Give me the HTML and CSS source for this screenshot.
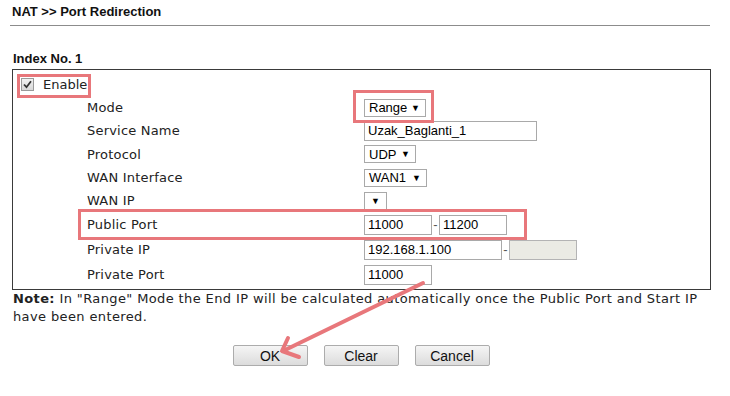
FILE: index.html
```html
<!DOCTYPE html>
<html lang="en">
<head>
  <meta charset="UTF-8">
  <meta name="viewport" content="width=device-width, initial-scale=1.0">
  <title>NAT Port Redirection</title>
  <link rel="stylesheet" href="styles.css">
</head>
<body>
  <div class="page">
    <h1 class="title">NAT &gt;&gt; Port Redirection</h1>
    <h2 class="index">Index No. 1</h2>

    <div class="box">
      <div class="enable">
        <span class="check">
          <svg width="11" height="11" viewBox="0 0 11 11"><path d="M2 5.5 L4.5 8.2 L9 2.2" fill="none" stroke="#333" stroke-width="1.8"/></svg>
        </span>
        <span>Enable</span>
      </div>

      <div class="label">Mode</div>
      <div class="ctrl"><span class="sel sel-range">Range <i>&#9660;</i></span></div>

      <div class="label">Service Name</div>
      <div class="ctrl"><input class="txt txt-name" type="text" value="Uzak_Baglanti_1"></div>

      <div class="label">Protocol</div>
      <div class="ctrl"><span class="sel sel-udp">UDP <i>&#9660;</i></span></div>

      <div class="label">WAN Interface</div>
      <div class="ctrl"><span class="sel sel-wan">WAN1 <i>&#9660;</i></span></div>

      <div class="label">WAN IP</div>
      <div class="ctrl"><span class="sel sel-empty"><i>&#9660;</i></span></div>

      <div class="label">Public Port</div>
      <div class="ctrl">
        <input class="txt txt-port" type="text" value="11000">
        <span class="dash">-</span>
        <input class="txt txt-port" type="text" value="11200">
      </div>

      <div class="label">Private IP</div>
      <div class="ctrl">
        <input class="txt txt-ip" type="text" value="192.168.1.100">
        <span class="dash">-</span>
        <input class="txt txt-port txt-off" type="text" value="" disabled>
      </div>

      <div class="label">Private Port</div>
      <div class="ctrl"><input class="txt txt-port" type="text" value="11000"></div>
    </div>

    <p class="note"><b>Note:</b> In "Range" Mode the End IP will be calculated automatically once the Public Port and Start IP have been entered.</p>

    <div class="buttons">
      <button class="btn">OK</button>
      <button class="btn">Clear</button>
      <button class="btn">Cancel</button>
    </div>

    <!-- red annotations drawn over the form -->
    <svg class="marks" width="730" height="396" viewBox="0 0 730 396">
      <g fill="none" stroke="#e8777b" stroke-width="3">
        <rect x="18.5" y="75.5" width="71" height="21"/>
        <rect x="354.5" y="91.5" width="78" height="30"/>
        <rect x="79.5" y="210.5" width="446" height="28"/>
      </g>
      <g fill="none" stroke="#e8777b" stroke-width="4" stroke-linecap="round" stroke-linejoin="round">
        <line x1="423" y1="283" x2="283" y2="351"/>
        <polyline points="288,338 282,351 299,357"/>
      </g>
    </svg>
  </div>
</body>
</html>
```

FILE: styles.css
```css
body {
  margin: 0;
  font-family: "Liberation Sans", Arial, sans-serif;
  background-color: #fff;
  color: #000;
}
.page {
  position: relative;
  width: 730px;
  height: 396px;
}
.title {
  margin: 0 0 0 10px;
  width: 700px;
  height: 26px;
  padding-left: 2px;
  box-sizing: border-box;
  border-bottom: 1px solid #8c8c8c;
  font-size: 13px;
  line-height: 24px;
  font-weight: bold;
  color: #111;
}
.index {
  margin: 25px 0 2px 13px;
  font-size: 13px;
  line-height: 16px;
  font-weight: bold;
  color: #111;
}
.box {
  margin-left: 12px;
  width: 699px;
  box-sizing: border-box;
  border: 1px solid #3a3a3a;
  padding: 2px 0 2px 0;
  display: grid;
  grid-template-columns: 351px 1fr;
  grid-template-rows: 24px 23px 23px 24px 23px 23px 25px 25px 25px;
  font-family: "DejaVu Sans", Verdana, sans-serif;
  font-size: 13px;
  color: #222;
}
.enable {
  grid-column: 1 / 3;
  display: flex;
  align-items: center;
  gap: 9px;
  padding-left: 8px;
}
.check {
  width: 11px;
  height: 11px;
  border: 1px solid #9a9a9a;
  background: linear-gradient(#f2f2f2, #d8d8d8);
  display: flex;
}
.label {
  display: flex;
  align-items: center;
  padding-left: 74px;
  letter-spacing: 0.2px;
}
.ctrl {
  display: flex;
  align-items: center;
  font-family: "Liberation Sans", Arial, sans-serif;
  font-size: 13px;
  color: #000;
}
.sel {
  height: 18px;
  box-sizing: border-box;
  border: 1px solid #a9a9a9;
  background: #fff;
  display: flex;
  align-items: center;
  justify-content: space-between;
  padding: 0 5px 0 4px;
}
.sel i {
  font-style: normal;
  font-size: 9px;
}
.sel-range { width: 62px; }
.sel-udp { width: 52px; }
.sel-wan { width: 63px; }
.sel-empty { width: 23px; justify-content: center; padding: 0; }
.txt {
  height: 20px;
  box-sizing: border-box;
  border: 1px solid #a9a9a9;
  padding: 0 3px;
  margin: 0;
  font-family: "Liberation Sans", Arial, sans-serif;
  font-size: 13px;
  color: #000;
  background: #fff;
  outline: none;
}
.txt-name { width: 173px; }
.txt-port { width: 68px; }
.txt-ip { width: 138px; }
.txt-off {
  background: #ebebe4;
  border-color: #b4b4b4;
}
.dash {
  width: 7px;
  text-align: center;
  color: #555;
}
.note {
  margin: 0 0 0 13px;
  width: 700px;
  font-family: "DejaVu Sans", Tahoma, sans-serif;
  font-size: 13px;
  letter-spacing: 0.38px;
  line-height: 18px;
  color: #222;
}
.buttons {
  margin: 19px 0 0 12px;
  width: 698px;
  display: flex;
  justify-content: center;
  gap: 16px;
}
.btn {
  width: 75px;
  height: 21px;
  padding: 0;
  border: 1px solid #acacac;
  border-radius: 2px;
  background: linear-gradient(#f5f5f5, #dcdcdc);
  font-family: "Liberation Sans", Arial, sans-serif;
  font-size: 14px;
  color: #111;
}
.marks {
  position: absolute;
  top: 0;
  left: 0;
  pointer-events: none;
}
```
